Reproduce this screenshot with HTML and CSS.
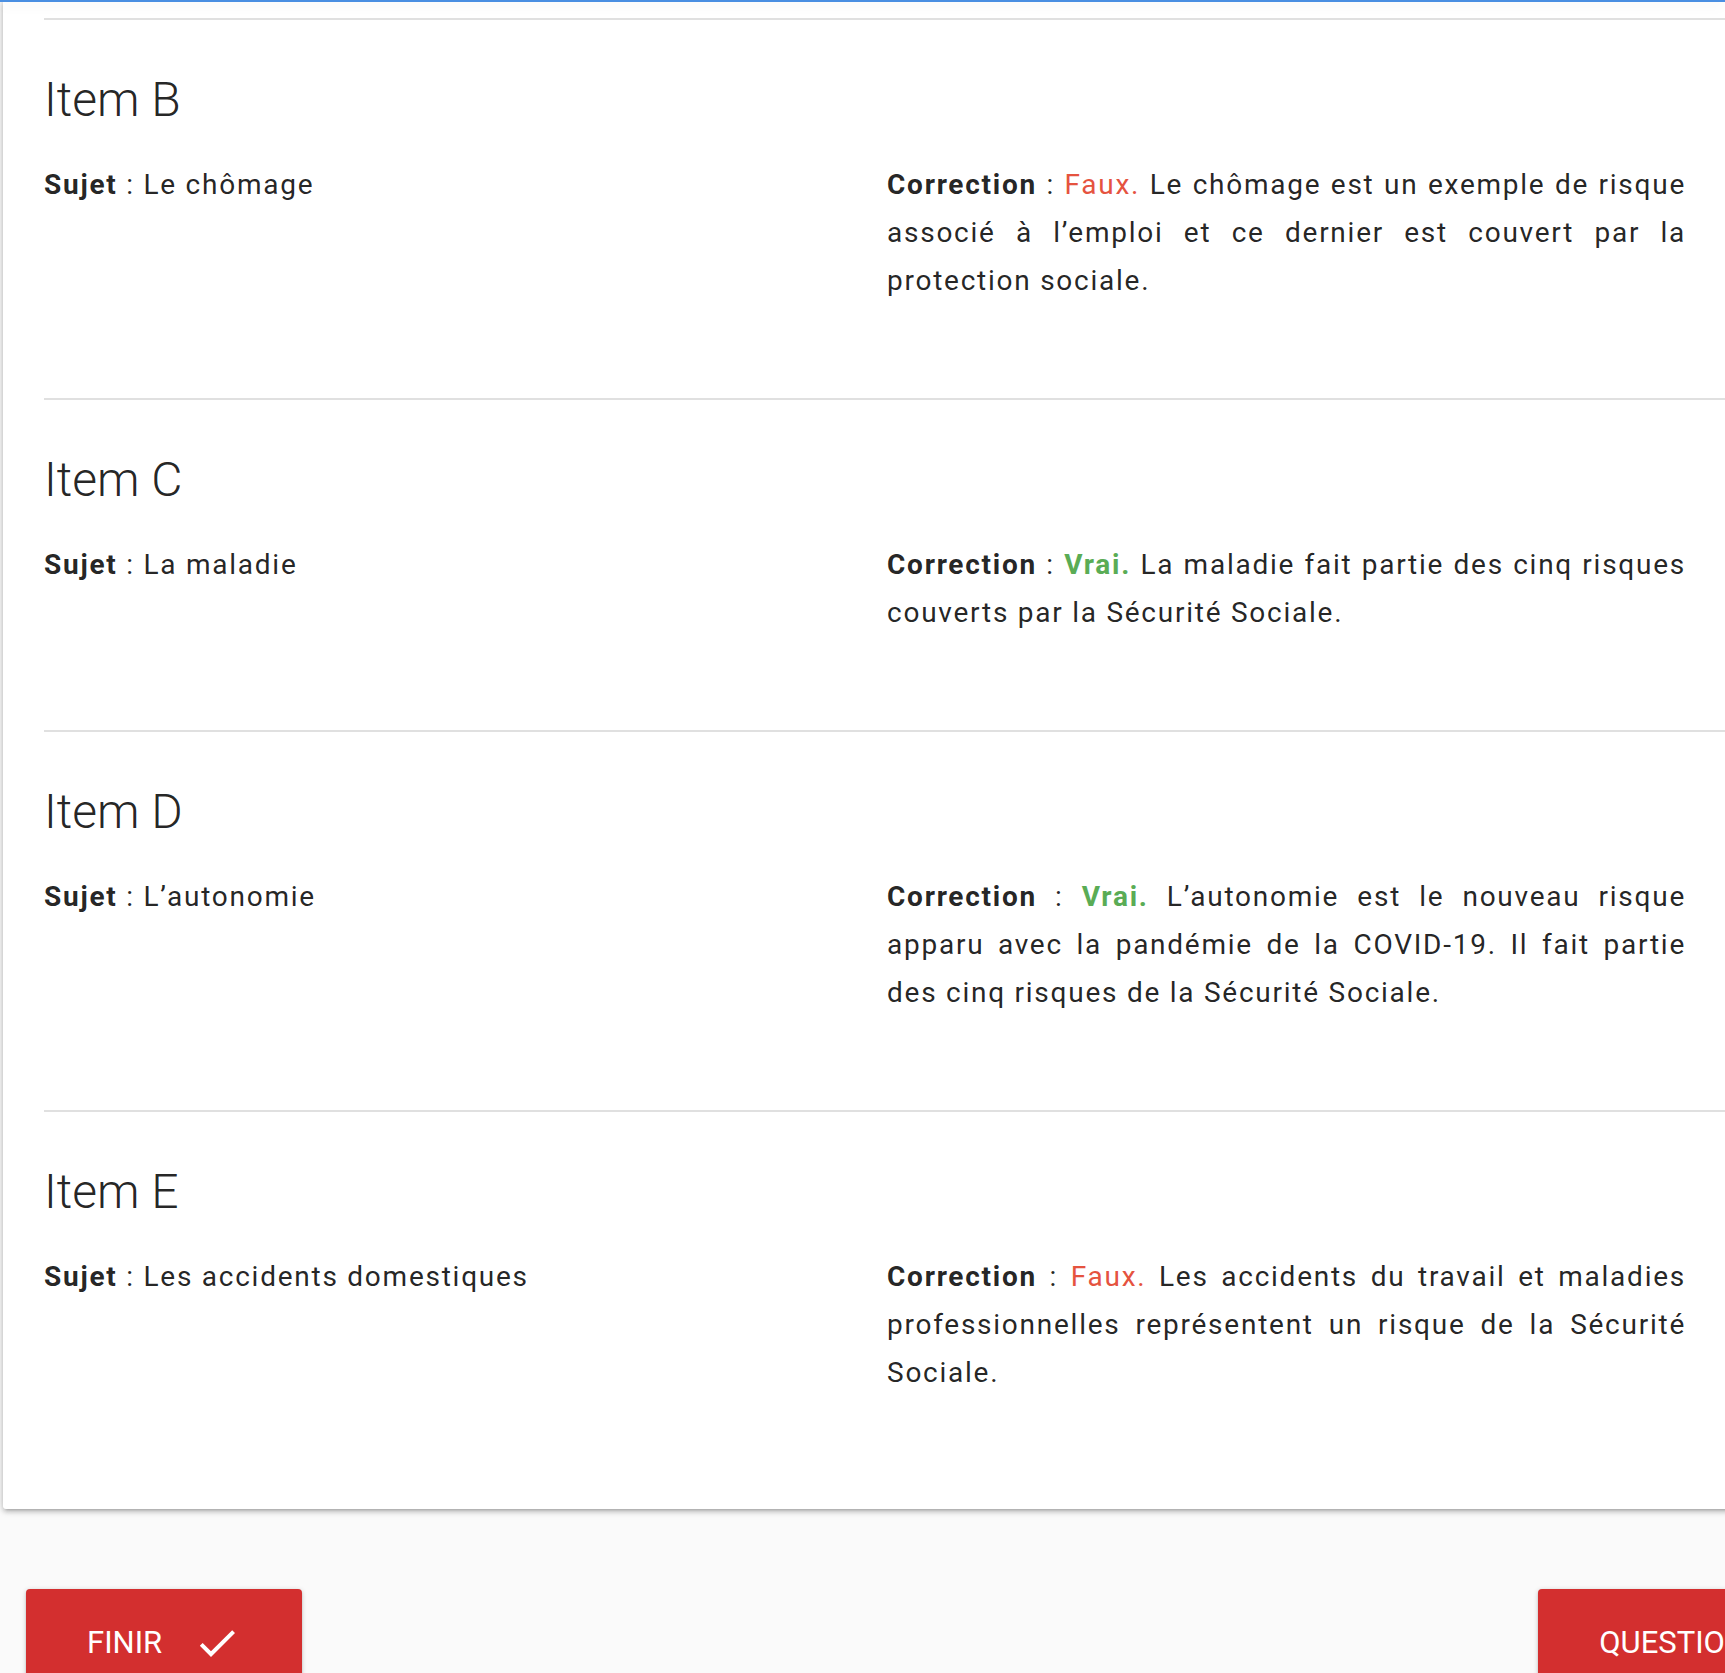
FILE: index.html
```html
<!DOCTYPE html>
<html lang="fr">
<head>
<meta charset="utf-8">
<title>Correction</title>
<link rel="stylesheet" href="styles.css">
</head>
<body>
<div class="topbar"></div>
<main class="page">
  <section class="card">
    <article class="item">
      <h3 class="item-title">Item B</h3>
      <div class="item-row">
        <p class="col"><b>Sujet</b> : Le chômage</p>
        <p class="col"><b>Correction</b> : <span class="faux">Faux.</span> Le chômage est un exemple de risque associé à l’emploi et ce dernier est couvert par la protection sociale.</p>
      </div>
    </article>
    <article class="item">
      <h3 class="item-title">Item C</h3>
      <div class="item-row">
        <p class="col"><b>Sujet</b> : La maladie</p>
        <p class="col"><b>Correction</b> : <b class="vrai">Vrai.</b> La maladie fait partie des cinq risques couverts par la Sécurité Sociale.</p>
      </div>
    </article>
    <article class="item">
      <h3 class="item-title">Item D</h3>
      <div class="item-row">
        <p class="col"><b>Sujet</b> : L’autonomie</p>
        <p class="col"><b>Correction</b> : <b class="vrai">Vrai.</b> L’autonomie est le nouveau risque apparu avec la pandémie de la COVID-19. Il fait partie des cinq risques de la Sécurité Sociale.</p>
      </div>
    </article>
    <article class="item">
      <h3 class="item-title">Item E</h3>
      <div class="item-row">
        <p class="col"><b>Sujet</b> : Les accidents domestiques</p>
        <p class="col"><b>Correction</b> : <span class="faux">Faux.</span> Les accidents du travail et maladies professionnelles représentent un risque de la Sécurité Sociale.</p>
      </div>
    </article>
  </section>
  <div class="actions">
    <button class="btn" type="button">FINIR
      <svg class="btn-icon" viewBox="0 0 24 24" aria-hidden="true"><path d="M9 16.17L4.83 12l-1.42 1.41L9 19 21 7l-1.41-1.41z"/></svg>
    </button>
    <button class="btn" type="button">QUESTION SUIVANTE
      <svg class="btn-icon" viewBox="0 0 24 24" aria-hidden="true"><path d="M10 6L8.59 7.41 13.17 12l-4.58 4.59L10 18l6-6z"/></svg>
    </button>
  </div>
</main>
</body>
</html>
```
FILE: styles.css
```css
html, body {
  margin: 0;
  padding: 0;
  overflow: hidden;
  background: #fafafa;
}

body {
  font-family: Roboto, "Liberation Sans", Arial, sans-serif;
  color: rgba(0, 0, 0, 0.87);
}

.topbar {
  position: fixed;
  top: 0;
  left: 0;
  right: 0;
  height: 2px;
  background: #4a8fe2;
  box-shadow: 0 3px 12px rgba(0, 0, 0, 0.10);
  z-index: 10;
}

.page {
  width: 1900px;
  padding-left: 3px;
}

.card {
  width: 1686px;
  background: #fff;
  padding: 18px 41px 19px 41px;
  border-radius: 0 0 3px 3px;
  box-shadow: 0 3px 4px 0 rgba(0, 0, 0, 0.14), 0 4px 2px -3px rgba(0, 0, 0, 0.12), 0 1px 8px 0 rgba(0, 0, 0, 0.2);
}

.item {
  border-top: 2px solid #e0e0e0;
  padding: 52px 0 93px;
}

.item-title {
  margin: 0 0 33px;
  font-size: 48px;
  line-height: 56px;
  font-weight: 300;
}

.item-row {
  display: grid;
  grid-template-columns: 1fr 1fr;
}

.col {
  margin: 0;
  padding-right: 44px;
  font-size: 28px;
  line-height: 48px;
  letter-spacing: 1.75px;
  text-align: justify;
}

.col b {
  font-weight: 700;
}

.faux {
  color: #e5533f;
}

.vrai {
  color: #5aac55;
}

.actions {
  display: flex;
  gap: 1236px;
  margin-top: 80px;
  padding-left: 23px;
}

.btn {
  display: inline-flex;
  align-items: center;
  gap: 31px;
  height: 107px;
  padding: 0 61px;
  border: none;
  border-radius: 4px;
  background: #d32f2f;
  color: #fff;
  font-family: Roboto, "Liberation Sans", Arial, sans-serif;
  font-size: 31px;
  font-weight: 400;
  white-space: nowrap;
  box-shadow: 0 2px 2px 0 rgba(0, 0, 0, 0.14), 0 3px 1px -2px rgba(0, 0, 0, 0.12), 0 1px 5px 0 rgba(0, 0, 0, 0.2);
}

.btn-icon {
  width: 48px;
  height: 48px;
  fill: #fff;
  flex: none;
}
```
